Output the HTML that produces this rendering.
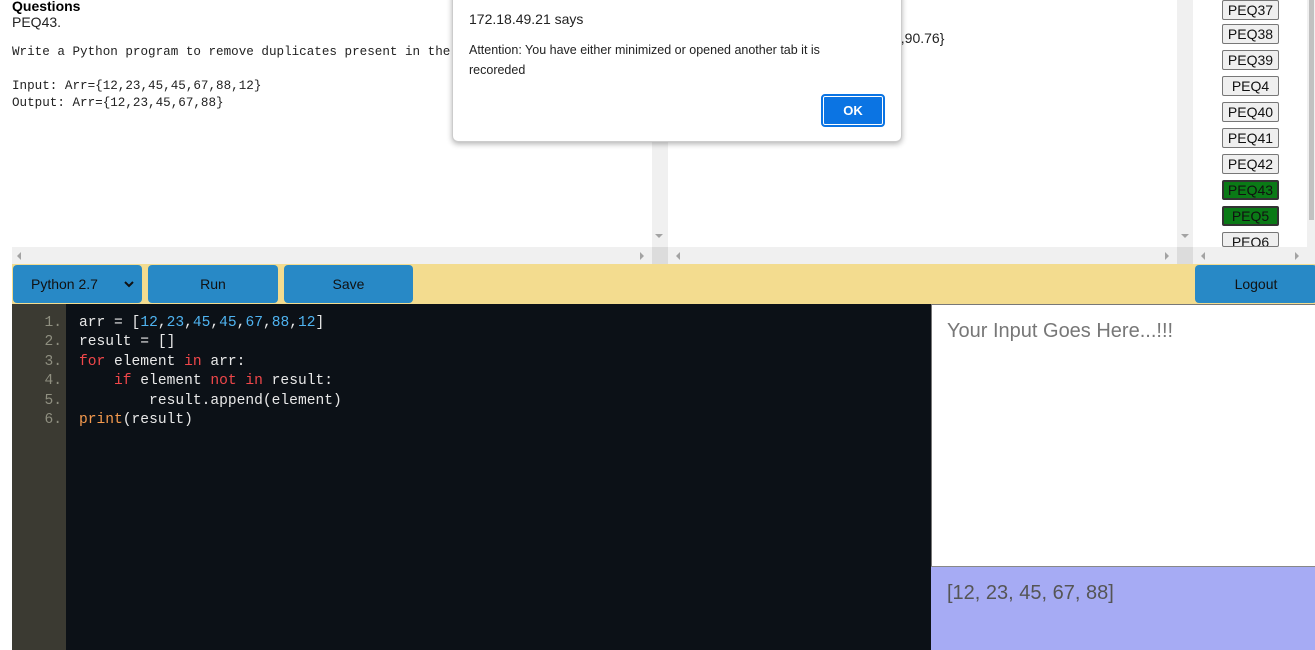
<!DOCTYPE html>
<html><head><meta charset="utf-8"><style>
*{margin:0;padding:0;box-sizing:border-box}
body{width:1315px;height:650px;overflow:hidden;background:#fff;font-family:"Liberation Sans",sans-serif;position:relative}
.a{position:absolute}
.mono{font-family:"Liberation Mono",monospace}
.peq{position:absolute;left:1222px;width:57px;height:20px;border:1px solid #777;background:#efefef;border-radius:2px;font-size:14px;text-align:center;line-height:18px;color:#111}
.peq.g{background:#0a7a16;border:2px solid #333;line-height:16px}
.btn{position:absolute;top:265px;height:38px;background:#2889c6;border-radius:4px;color:#111;font-size:14px;line-height:38px;text-align:center}
.code div{height:19.4px;white-space:pre}
.n{color:#4fb3f0}.k{color:#f0474a}.p{color:#f59a4e}
.tri{position:absolute;width:0;height:0;border:4px solid transparent}
</style></head><body>
<div class="a" style="left:12px;top:-2px;font-weight:bold;font-size:14px">Questions</div>
<div class="a" style="left:12px;top:14px;font-size:14px;color:#222">PEQ43.</div>
<div class="a mono" style="left:12px;top:44px;font-size:12.6px;line-height:17px;white-space:pre;color:#222">Write a Python program to remove duplicates present in the</div>
<div class="a mono" style="left:12px;top:78px;font-size:12.6px;line-height:17px;white-space:pre;color:#222">Input: Arr={12,23,45,45,67,88,12}
Output: Arr={12,23,45,67,88}</div>
<div class="a" style="left:652px;top:0;width:16px;height:247px;background:#f0f0f0"></div>
<div class="a" style="left:1177px;top:0;width:16px;height:247px;background:#f0f0f0"></div>
<div class="a" style="left:1307px;top:0;width:8px;height:247px;background:#f0f0f0"></div>
<div class="a" style="left:1309px;top:0;width:5px;height:220px;background:#c1c1c1"></div>
<div class="a" style="left:12px;top:247px;width:1303px;height:17px;background:#f0f0f0"></div>
<div class="a" style="left:652px;top:247px;width:16px;height:17px;background:#dcdcdc"></div>
<div class="a" style="left:1177px;top:247px;width:16px;height:17px;background:#dcdcdc"></div>
<div class="tri" style="left:655px;top:234px;border-top-color:#a3a3a3"></div>
<div class="tri" style="left:1181px;top:234px;border-top-color:#a3a3a3"></div>
<div class="tri" style="left:13px;top:252px;border-right-color:#a3a3a3"></div>
<div class="tri" style="left:640px;top:252px;border-left-color:#a3a3a3"></div>
<div class="tri" style="left:672px;top:252px;border-right-color:#a3a3a3"></div>
<div class="tri" style="left:1165px;top:252px;border-left-color:#a3a3a3"></div>
<div class="tri" style="left:1197px;top:252px;border-right-color:#a3a3a3"></div>
<div class="tri" style="left:1295px;top:252px;border-left-color:#a3a3a3"></div>
<div class="a" style="left:893px;top:30px;font-size:14px;color:#222">5,90.76}</div>
<div class="peq" style="top:0">PEQ37</div>
<div class="peq" style="top:24px">PEQ38</div>
<div class="peq" style="top:50px">PEQ39</div>
<div class="peq" style="top:76px">PEQ4</div>
<div class="peq" style="top:102px">PEQ40</div>
<div class="peq" style="top:128px">PEQ41</div>
<div class="peq" style="top:154px">PEQ42</div>
<div class="peq g" style="top:180px">PEQ43</div>
<div class="peq g" style="top:206px">PEQ5</div>
<div class="peq" style="top:232px;height:15px;overflow:hidden">PEQ6</div>
<div class="a" style="left:12px;top:264px;width:1303px;height:40px;background:#f3dc8f"></div>
<div class="btn" style="left:13px;width:129px;text-align:left;padding-left:18px">Python 2.7<svg style="position:absolute;right:8px;top:15px" width="10" height="8" viewBox="0 0 10 8"><path d="M1 2 L5 6 L9 2" stroke="#111" stroke-width="2" fill="none"/></svg></div>
<div class="btn" style="left:148px;width:130px">Run</div>
<div class="btn" style="left:284px;width:129px">Save</div>
<div class="btn" style="left:1195px;width:122px">Logout</div>
<div class="a" style="left:12px;top:304px;width:54px;height:346px;background:#3b3a32"></div>
<div class="a" style="left:66px;top:304px;width:865px;height:346px;background:#0c1117"></div>
<div class="a mono code" style="left:12px;top:315px;width:50px;text-align:right;font-size:14.6px;color:#8f8f80">
<div>1.</div><div>2.</div><div>3.</div><div>4.</div><div>5.</div><div>6.</div></div>
<div class="a mono code" style="left:79px;top:315px;font-size:14.6px;color:#e8e8e8">
<div>arr = [<span class="n">12</span>,<span class="n">23</span>,<span class="n">45</span>,<span class="n">45</span>,<span class="n">67</span>,<span class="n">88</span>,<span class="n">12</span>]</div>
<div>result = []</div>
<div><span class="k">for</span> element <span class="k">in</span> arr:</div>
<div>    <span class="k">if</span> element <span class="k">not in</span> result:</div>
<div>        result.append(element)</div>
<div><span class="p">print</span>(result)</div></div>
<div class="a" style="left:931px;top:304px;width:384px;height:263px;background:#fff;border-top:1px solid #777;border-left:1px solid #777"></div>
<div class="a" style="left:947px;top:320px;font-size:20px;color:#777">Your Input Goes Here...!!!</div>
<div class="a" style="left:931px;top:566px;width:384px;height:84px;background:#a6abf4;border-top:1px solid #888"></div>
<div class="a" style="left:947px;top:582px;font-size:20px;color:#555">[12, 23, 45, 67, 88]</div>
<div class="a" style="left:452px;top:-10px;width:450px;height:152px;background:#fff;border:1px solid #ccc;border-radius:6px;box-shadow:0 2px 6px rgba(0,0,0,.3)"></div>
<div class="a" style="left:469px;top:11px;font-size:14px;color:#222">172.18.49.21 says</div>
<div class="a" style="left:469px;top:40px;width:390px;font-size:12.5px;line-height:20px;color:#222">Attention: You have either minimized or opened another tab it is recoreded</div>
<div class="a" style="left:821px;top:94px;width:64px;height:33px;background:#0b74e3;border:2px solid #0b74e3;box-shadow:inset 0 0 0 1px #fff;border-radius:4px;color:#fff;font-weight:bold;font-size:13px;text-align:center;line-height:29px">OK</div>
</body></html>
